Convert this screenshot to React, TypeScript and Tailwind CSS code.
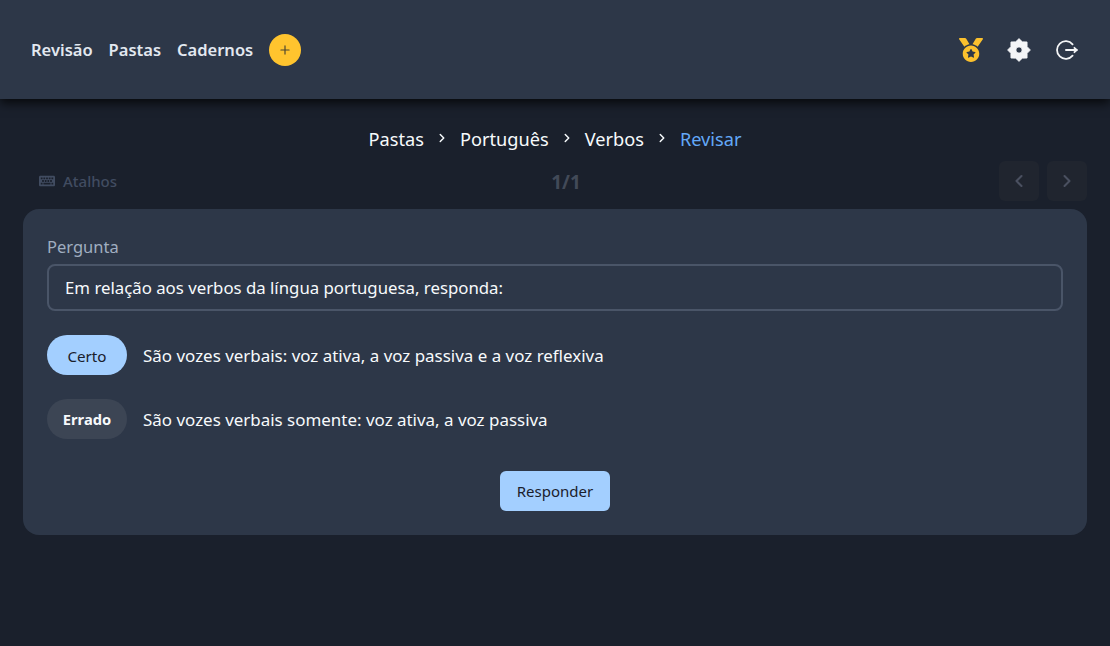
import { ChevronLeft, ChevronRight, Plus } from "lucide-react";
import { FaKeyboard, FaMedal } from "react-icons/fa";

const crumbs = ["Pastas", "Português", "Verbos"];

// eight soft points around a small hole
function GearIcon() {
  const pts = Array.from({ length: 16 }, (_, i) => {
    const a = ((i * 22.5 - 90) * Math.PI) / 180;
    const r = i % 2 === 0 ? 11.4 : 8.8;
    return `${(12 + r * Math.cos(a)).toFixed(2)} ${(12 + r * Math.sin(a)).toFixed(2)}`;
  });
  return (
    <svg width="24" height="24" viewBox="0 0 24 24">
      <path
        fillRule="evenodd"
        fill="currentColor"
        stroke="currentColor"
        strokeWidth="0.8"
        strokeLinejoin="round"
        d={`M${pts.join("L")}Z M12 8.9a3.1 3.1 0 1 0 0 6.2a3.1 3.1 0 1 0 0-6.2Z`}
      />
    </svg>
  );
}

function Header() {
  return (
    <header className="flex h-[99px] items-center justify-between bg-[#2d3748] pl-[31px] pr-[31px] shadow-[0_4px_10px_rgba(0,0,0,0.75)]">
      <nav className="flex items-center text-[16.5px] font-semibold text-[#e2e8f0]">
        <a className="mr-4 pt-[2px]">Revisão</a>
        <a className="mr-4 pt-[2px]">Pastas</a>
        <a className="pt-[2px]">Cadernos</a>
        <button className="ml-4 flex h-8 w-8 items-center justify-center rounded-full bg-[#ffc42e] text-[#4a4530]">
          <Plus size={14} strokeWidth={2} />
        </button>
      </nav>
      <div className="flex items-center gap-6 text-[#f4f5f7]">
        <FaMedal size={24} className="text-[#fbc02d]" />
        <GearIcon />
        <svg width="24" height="24" viewBox="0 0 24 24" fill="none" stroke="currentColor" strokeWidth="1.8" strokeLinecap="round">
          <path d="M17.6 6.4A8.8 8.8 0 1 0 17.6 17.6" />
          <path d="M11 12H21.5" strokeWidth="2" />
          <path d="M19.4 9.8 21.8 12 19.4 14.2" />
        </svg>
      </div>
    </header>
  );
}

function Breadcrumb() {
  return (
    <div className="mt-[28px] flex h-[26px] items-center justify-center text-[18.2px] text-[#f7fafc]">
      {crumbs.map((c) => (
        <span key={c} className="flex items-center">
          <span>{c}</span>
          <ChevronRight size={14} strokeWidth={2.5} className="mx-[11px] -translate-y-[2px]" />
        </span>
      ))}
      <span className="text-[#63a8f8]">Revisar</span>
    </div>
  );
}

function Toolbar() {
  return (
    <div className="mt-[8px] grid h-10 grid-cols-3 items-center pl-[16px]">
      <div className="flex items-center text-[15px] font-medium text-[#414c61]">
        <FaKeyboard size={16} className="mr-2" />
        Atalhos
      </div>
      <div className="pl-[6px] pt-[2px] text-center text-[19px] font-bold text-[#424a58]">1/1</div>
      <div className="flex justify-end gap-2">
        <button className="flex h-10 w-10 items-center justify-center rounded-md bg-[#20252f] text-[#4a5060]">
          <ChevronLeft size={20} strokeWidth={2.5} />
        </button>
        <button className="flex h-10 w-10 items-center justify-center rounded-md bg-[#20252f] text-[#4a5060]">
          <ChevronRight size={20} strokeWidth={2.5} />
        </button>
      </div>
    </div>
  );
}

function Option({ label, text, active }: { label: string; text: string; active?: boolean }) {
  return (
    <div className="flex items-center gap-4">
      <span
        className={
          active
            ? "flex h-10 w-20 items-center justify-center rounded-full bg-[#a3cfff] pt-[2px] text-[15.2px] text-[#1a202c]"
            : "flex h-10 w-20 items-center justify-center rounded-full bg-[#3c4554] text-[14.7px] font-bold text-[#f7fafc]"
        }
      >
        {label}
      </span>
      <span className="pt-[1px] text-[16.95px] text-[#f7fafc]">{text}</span>
    </div>
  );
}

export default function App() {
  return (
    <div className="min-h-[646px] bg-[#1a202c] font-['Noto_Sans',sans-serif]">
      <Header />
      <main className="px-[23px]">
        <Breadcrumb />
        <Toolbar />
        <section className="mt-2 flex h-[326px] flex-col rounded-2xl bg-[#2d3748] p-6">
          <label className="mt-[2px] text-[16.5px] leading-[24px] text-[#a0aec0]">Pergunta</label>
          <div className="mt-[5px] flex h-[47px] items-center rounded-lg border-2 border-[#4a5568] px-4 text-[16.8px] text-[#f7fafc]">
            Em relação aos verbos da língua portuguesa, responda:
          </div>
          <div className="mt-6 flex flex-col gap-6">
            <Option label="Certo" text="São vozes verbais: voz ativa, a voz passiva e a voz reflexiva" active />
            <Option label="Errado" text="São vozes verbais somente: voz ativa, a voz passiva" />
          </div>
          <div className="mt-8 flex justify-center">
            <button className="h-10 w-[110px] rounded-md bg-[#a3cfff] text-[15px] text-[#1a202c]">Responder</button>
          </div>
        </section>
      </main>
    </div>
  );
}
